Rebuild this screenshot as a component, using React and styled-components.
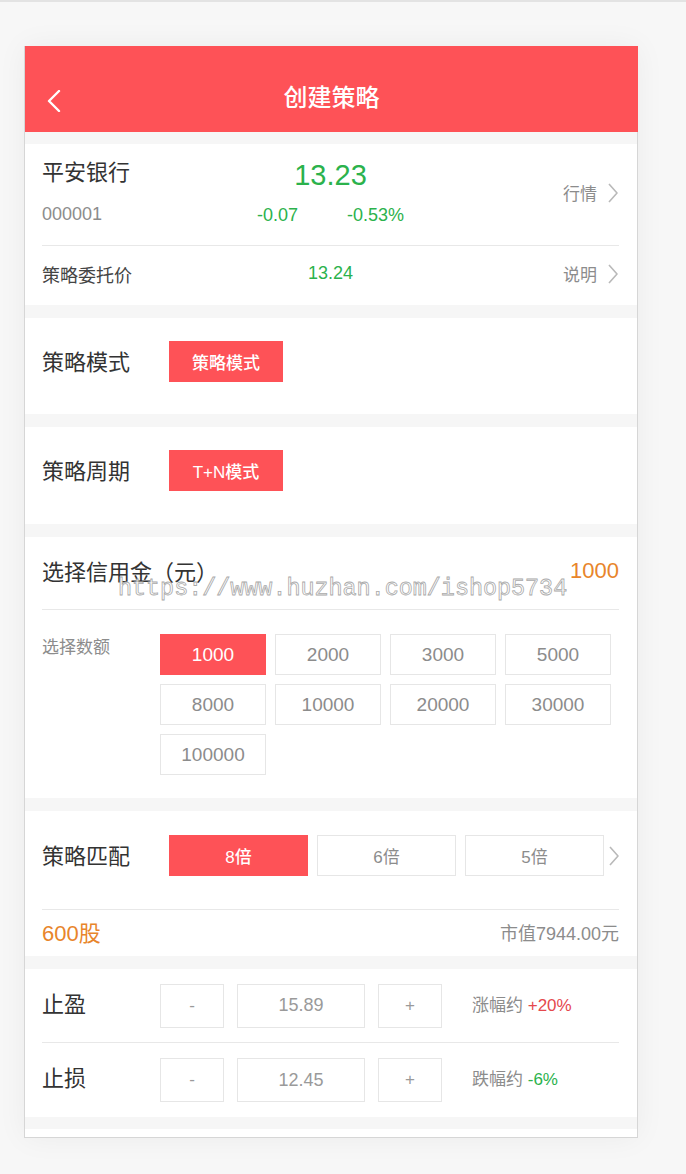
import React from "react"
import styled, { createGlobalStyle } from "styled-components"

const colors = {
  red: "#fe5257",
  green: "#2bb24c",
  orange: "#e8852b",
  text: "#333333",
  muted: "#8c8c8c",
  line: "#e8e8e8",
  gap: "#f6f6f6",
}

const GlobalStyle = createGlobalStyle`
  html, body {
    margin: 0;
    padding: 0;
    background: #f7f7f7;
  }
  body {
    border-top: 2px solid #e3e3e3;
    font-family: "Liberation Sans", "Noto Sans CJK SC", sans-serif;
    color: ${colors.text};
  }
`

const Page = styled.div`
  position: relative;
  padding: 44px 0 38px 24px;
`

const Card = styled.div`
  width: 612px;
  background: #fff;
  border: 1px solid #d6d6d6;
  border-top: none;
  padding-bottom: 8px;
  box-shadow: 0 0 28px rgba(0, 0, 0, 0.05);
`

const Header = styled.header`
  box-sizing: border-box;
  height: 86px;
  padding-top: 35px;
  background: ${colors.red};
  text-align: center;
  position: relative;
  color: #fff;
  font-size: 24px;
  line-height: 34px;
  font-weight: 500;
  margin-right: -1px;
`

const Back = styled.svg`
  position: absolute;
  left: 22px;
  top: 44px;
`

const Body = styled.div`
  background: ${colors.gap};
  padding-top: 12px;
  display: flex;
  flex-direction: column;
  gap: 13px;
  padding-bottom: 12px;
`

const Section = styled.section`
  background: #fff;
  padding: 0 18px 0 17px;
`

const Row = styled.div`
  display: flex;
  align-items: center;
  height: ${({ h }) => (h ? `${h}px` : "auto")};
  padding: ${({ pad }) => pad || "0"};
  border-bottom: ${({ line }) => (line ? `1px solid ${colors.line}` : "none")};
`

const QuoteGrid = styled.div`
  display: grid;
  grid-template-columns: 1fr auto 1fr;
  align-items: center;
  width: 100%;
  margin-bottom: ${({ lift }) => lift || 0}px;
`

const Stack = styled.div`
  display: flex;
  flex-direction: column;
  gap: ${({ gap }) => gap}px;
  align-items: ${({ center }) => (center ? "center" : "flex-start")};
  margin-bottom: ${({ lift }) => lift || 0}px;
`

const Name = styled.div`
  font-size: 22px;
  line-height: 24px;
  color: ${colors.text};
`

const Code = styled.div`
  font-size: 18px;
  line-height: 20px;
  color: ${colors.muted};
`

const Price = styled.div`
  font-size: 29px;
  line-height: 32px;
  color: ${colors.green};
`

const Changes = styled.div`
  display: flex;
  gap: 49px;
  font-size: 18px;
  line-height: 20px;
  color: ${colors.green};
`

const Link = styled.div`
  justify-self: end;
  display: flex;
  align-items: center;
  gap: 10px;
  font-size: 17px;
  color: ${colors.muted};
  margin-bottom: ${({ lift }) => lift || 0}px;
`

const SmallLabel = styled.div`
  font-size: 18px;
  color: #444;
`

const GreenValue = styled.div`
  font-size: 18px;
  color: ${colors.green};
`

const Label = styled.div`
  font-size: 22px;
  color: ${colors.text};
  width: ${({ w }) => w || "auto"};
  flex-shrink: 0;
  margin-bottom: ${({ lift }) => lift || 0}px;
`

const Chip = styled.div`
  box-sizing: border-box;
  height: 41px;
  width: ${({ w }) => (w ? `${w}px` : "auto")};
  display: flex;
  align-items: center;
  justify-content: center;
  font-size: ${({ fs }) => fs || 17}px;
  font-weight: ${({ bold }) => (bold ? 500 : 400)};
  background: ${({ active }) => (active ? colors.red : "#fff")};
  color: ${({ active }) => (active ? "#fff" : colors.muted)};
  border: 1px solid ${({ active }) => (active ? colors.red : "#e6e6e6")};
`

const Amount = styled.div`
  margin-left: auto;
  font-size: 22px;
  color: ${colors.orange};
  margin-bottom: 4px;
`

const PickArea = styled.div`
  display: flex;
  padding: 24px 0 23px;
`

const PickLabel = styled.div`
  width: 118px;
  font-size: 17px;
  color: ${colors.muted};
  margin-top: -1px;
`

const AmountGrid = styled.div`
  display: grid;
  grid-template-columns: repeat(4, 106px);
  grid-auto-rows: 41px;
  gap: 9px 9px;
`

const Leverage = styled.div`
  display: flex;
  align-items: center;
  gap: 9px;
  margin-left: 31px;
  svg {
    margin-left: -5px;
  }
`

const Shares = styled.div`
  font-size: 22px;
  color: ${colors.orange};
  margin-bottom: 4px;
`

const MarketValue = styled.div`
  margin-left: auto;
  font-size: 18px;
  color: ${colors.muted};
  margin-bottom: 2px;
`

const Stepper = styled.div`
  display: flex;
  align-items: center;
  gap: 13px;
  margin-left: 74px;
`

const StepBox = styled.div`
  box-sizing: border-box;
  width: ${({ w }) => w}px;
  height: 44px;
  border: 1px solid #e6e6e6;
  display: flex;
  align-items: center;
  justify-content: center;
  font-size: ${({ fs }) => fs || 17}px;
  color: #9a9a9a;
`

const Range = styled.div`
  margin-left: 30px;
  margin-bottom: 5px;
  font-size: 17px;
  color: ${colors.muted};
  span {
    color: ${({ up }) => (up ? "#e5484d" : colors.green)};
  }
`

const Watermark = styled.div`
  position: absolute;
  left: 118px;
  top: 574px;
  font-family: "Liberation Mono", monospace;
  font-size: 23.4px;
  color: rgba(255, 255, 255, 0.75);
  -webkit-text-stroke: 0.8px #a9a9a9;
  pointer-events: none;
  white-space: nowrap;
`

const Chevron = () => (
  <svg width="12" height="22" viewBox="0 0 12 22" fill="none">
    <path d="M2 2l8 9-8 9" stroke="#b9b9b9" strokeWidth="1.6" strokeLinejoin="round" />
  </svg>
)

const amounts = ["1000", "2000", "3000", "5000", "8000", "10000", "20000", "30000", "100000"]
const levers = ["8倍", "6倍", "5倍"]

const StopRow = ({ label, value, hint, pct, up, line }) => (
  <Row h={line ? 73 : 74} line={line}>
    <Label w="44px" lift={8}>{label}</Label>
    <Stepper>
      <StepBox w={64}>-</StepBox>
      <StepBox w={128} fs={18}>{value}</StepBox>
      <StepBox w={64}>+</StepBox>
    </Stepper>
    <Range up={up}>
      {hint} <span>{pct}</span>
    </Range>
  </Row>
)

export default function App() {
  return (
    <>
      <GlobalStyle />
      <Page>
        <Card>
          <Header>
            <Back width="14" height="22" viewBox="0 0 14 22" fill="none">
              <path d="M12 1L2 11l10 10" stroke="#fff" strokeWidth="2.4" strokeLinecap="round" strokeLinejoin="round" />
            </Back>
            创建策略
          </Header>
          <Body>
            <Section>
              <Row h={101} line>
                <QuoteGrid>
                  <Stack gap={19} lift={4}>
                    <Name>平安银行</Name>
                    <Code>000001</Code>
                  </Stack>
                  <Stack gap={14} lift={6} center>
                    <Price>13.23</Price>
                    <Changes>
                      <span>-0.07</span>
                      <span>-0.53%</span>
                    </Changes>
                  </Stack>
                  <Link lift={4}>
                    行情 <Chevron />
                  </Link>
                </QuoteGrid>
              </Row>
              <Row h={59}>
                <QuoteGrid lift={4}>
                  <SmallLabel>策略委托价</SmallLabel>
                  <GreenValue>13.24</GreenValue>
                  <Link>
                    说明 <Chevron />
                  </Link>
                </QuoteGrid>
              </Row>
            </Section>

            <Section>
              <Row pad="23px 0 32px">
                <Label w="127px" lift={3}>策略模式</Label>
                <Chip active bold w={114}>策略模式</Chip>
              </Row>
            </Section>

            <Section>
              <Row pad="23px 0 33px">
                <Label w="127px" lift={3}>策略周期</Label>
                <Chip active bold w={114}>T+N模式</Chip>
              </Row>
            </Section>

            <Section>
              <Row h={72} line>
                <Label lift={6}>选择信用金（元）</Label>
                <Amount>1000</Amount>
              </Row>
              <PickArea>
                <PickLabel>选择数额</PickLabel>
                <AmountGrid>
                  {amounts.map((a, i) => (
                    <Chip key={a} active={i === 0} fs={19}>
                      {a}
                    </Chip>
                  ))}
                </AmountGrid>
              </PickArea>
            </Section>

            <Section>
              <Row pad="24px 0 33px" line>
                <Label w="96px" lift={3}>策略匹配</Label>
                <Leverage>
                  {levers.map((l, i) => (
                    <Chip key={l} active={i === 0} bold={i === 0} w={139} fs={17}>
                      {l}
                    </Chip>
                  ))}
                  <Chevron />
                </Leverage>
              </Row>
              <Row h={46}>
                <Shares>600股</Shares>
                <MarketValue>市值7944.00元</MarketValue>
              </Row>
            </Section>

            <Section>
              <StopRow line label="止盈" value="15.89" hint="涨幅约" pct="+20%" up />
              <StopRow label="止损" value="12.45" hint="跌幅约" pct="-6%" />
            </Section>
          </Body>
        </Card>
        <Watermark>https://www.huzhan.com/ishop5734</Watermark>
      </Page>
    </>
  )
}
